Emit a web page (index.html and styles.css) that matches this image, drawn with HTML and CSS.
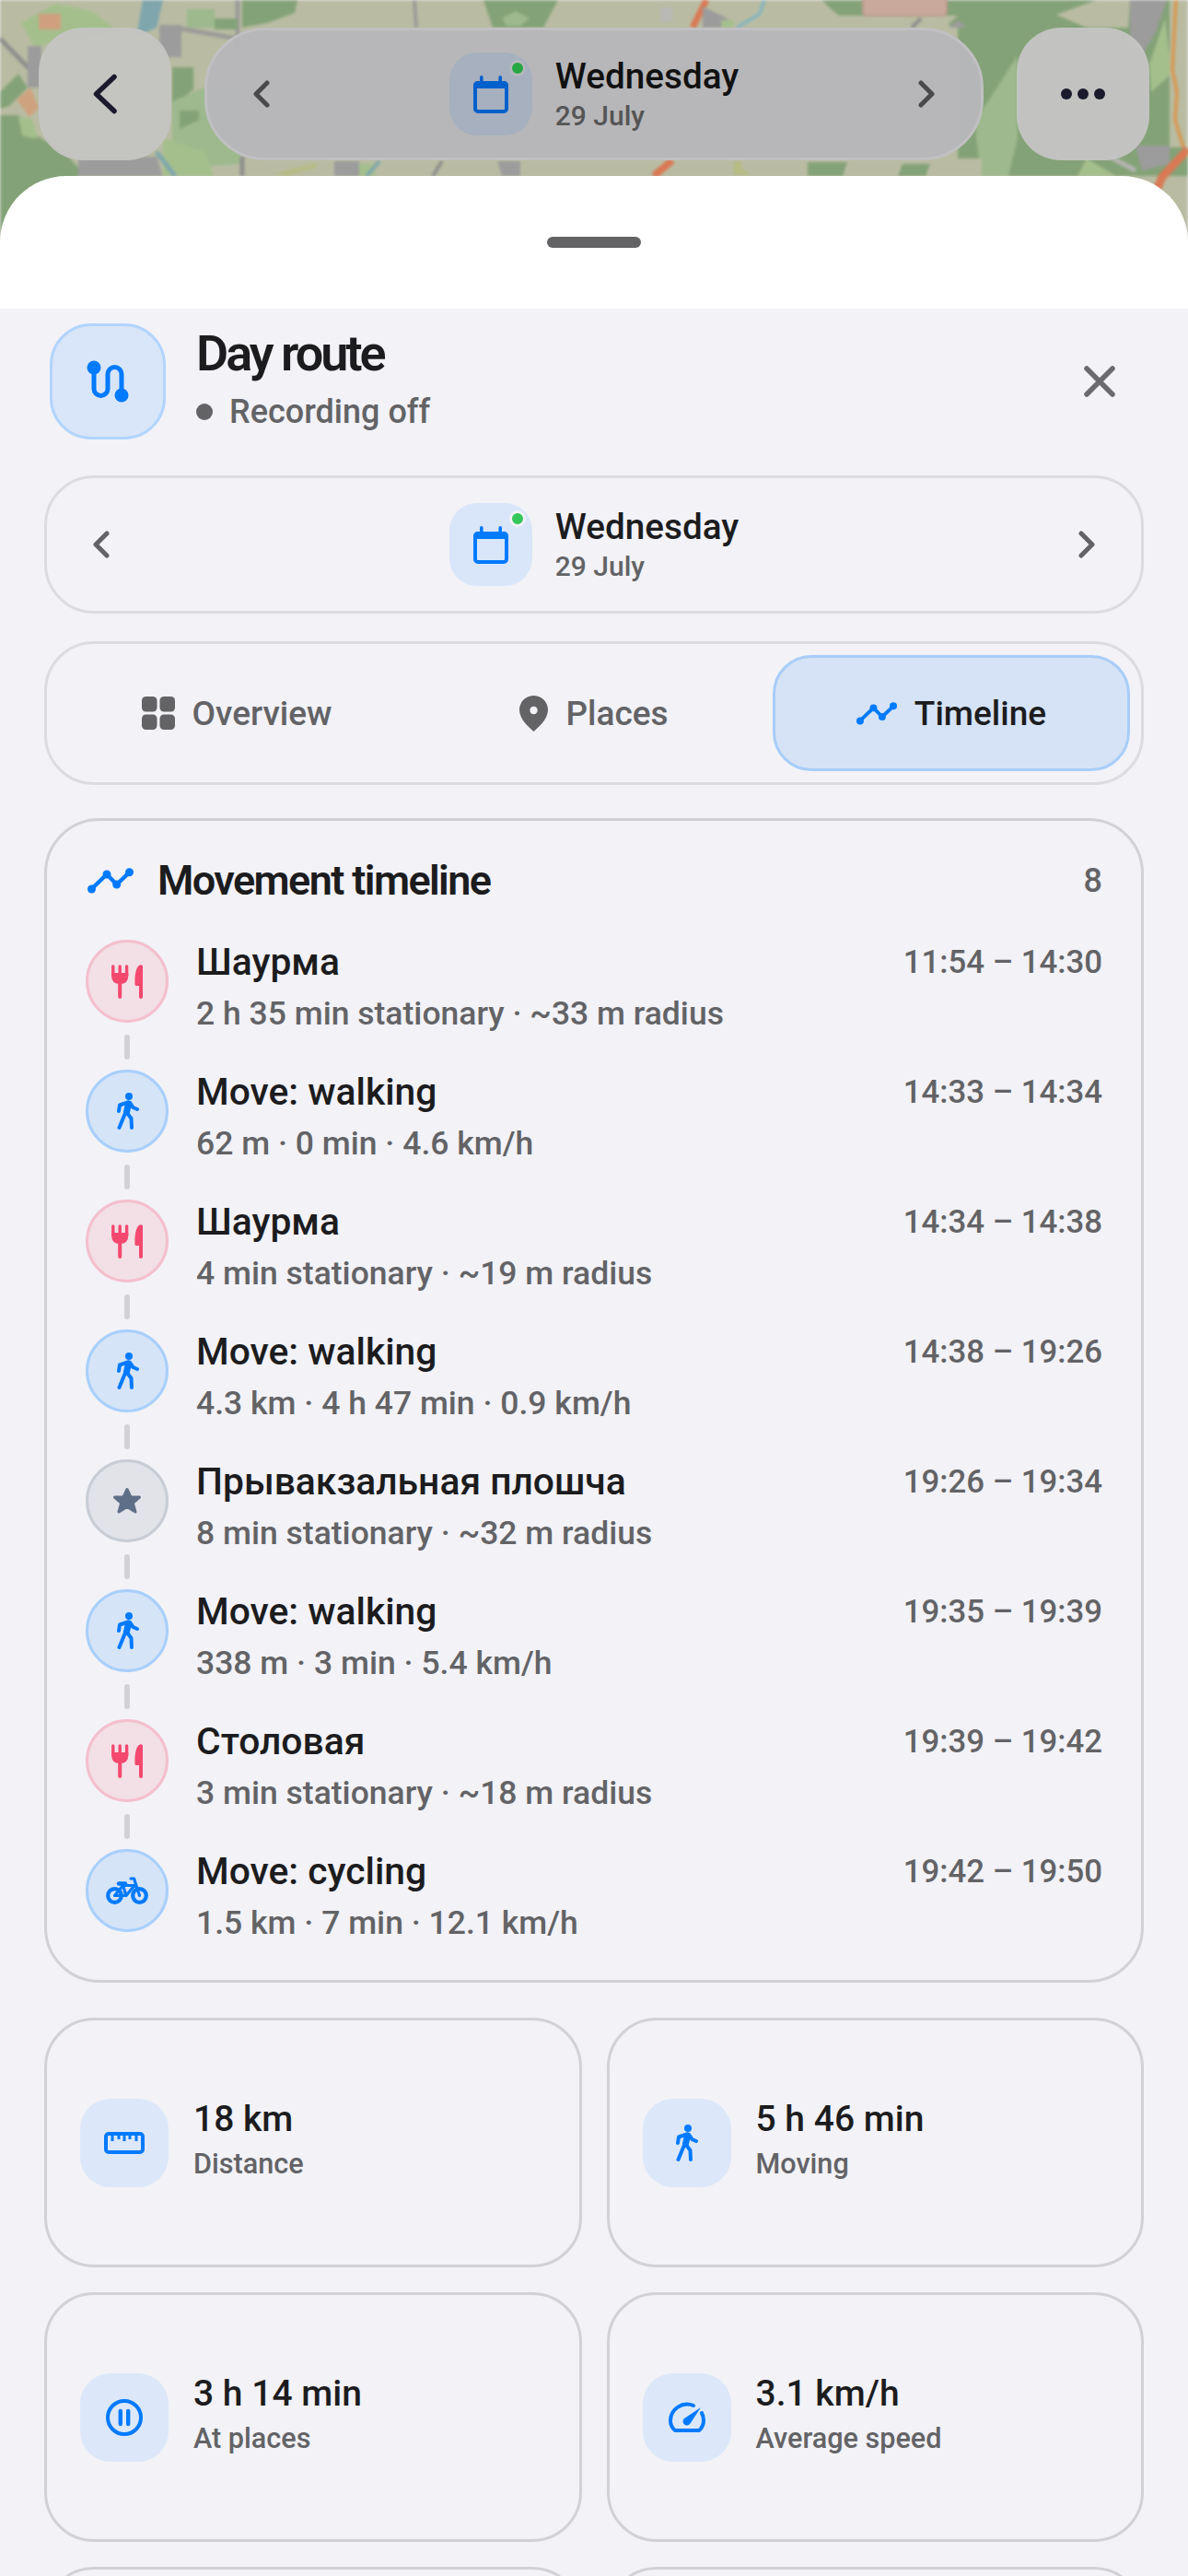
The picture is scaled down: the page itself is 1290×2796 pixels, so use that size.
FILE: index.html
```html
<!DOCTYPE html>
<html lang="en">
<head>
<meta charset="utf-8">
<title>Day route</title>
<link rel="stylesheet" href="styles.css">
</head>
<body>
<svg width="0" height="0" class="defs">
  <defs>
    <symbol id="fork" viewBox="0 0 34 37">
      <path d="M1.8 2V12M9.2 2V12M16.6 2V12" fill="none" stroke="currentColor" stroke-width="3.4" stroke-linecap="round"/>
      <path d="M.1 9H18.3V12Q18.300 21 9.200 21Q.1 21 .1 12Z" fill="currentColor"/>
      <path d="M9.2 18V35" fill="none" stroke="currentColor" stroke-width="4" stroke-linecap="round"/>
      <path d="M34 2V35a2 2 0 0 1-4 0V23H27a1.5 1.5 0 0 1-1.5-1.5C25 10 27 2 31 .5C33 0 34 1 34 2Z" fill="currentColor"/>
    </symbol>
    <symbol id="walk" viewBox="0 0 25 40">
      <circle cx="14" cy="4" r="4" fill="currentColor"/>
      <path d="M13.5 12L11.5 21" fill="none" stroke="currentColor" stroke-width="7" stroke-linecap="round"/>
      <path d="M13 10.5L4 13.5L3 20M15 11L18.5 16L23 18M10.500 21L3.500 38M12 22L16.500 28L17 38" fill="none" stroke="currentColor" stroke-width="4" stroke-linecap="round" stroke-linejoin="round"/>
    </symbol>
    <symbol id="star" viewBox="0 0 32 30">
      <path d="M16 2.5L20 11H29.5L22.3 17.3L25 27L16 21.5L7 27L9.7 17.3L2.5 11H12Z" fill="currentColor" stroke="currentColor" stroke-width="3" stroke-linejoin="round"/>
    </symbol>
    <symbol id="bike" viewBox="0 0 46 30">
      <circle cx="9.5" cy="20.5" r="7.3" fill="none" stroke="currentColor" stroke-width="4.2"/>
      <circle cx="36.5" cy="20.5" r="7.3" fill="none" stroke="currentColor" stroke-width="4.2"/>
      <path d="M9.5 20.5H22L31 9.5H18.5L9.5 20.5M18 8L22 20.5M27 2H30.5L36.5 20.5" fill="none" stroke="currentColor" stroke-width="3.2" stroke-linecap="round" stroke-linejoin="round"/>
      <path d="M14 7.5H21" fill="none" stroke="currentColor" stroke-width="4.5" stroke-linecap="round"/>
    </symbol>
    <symbol id="trend" viewBox="0 0 50 28">
      <path d="M4.3 23L21 7L31.7 18L45.7 4.7" fill="none" stroke="currentColor" stroke-width="4.4" stroke-linejoin="round"/>
      <circle cx="4.5" cy="23" r="4.5" fill="currentColor"/><circle cx="21" cy="7" r="4.5" fill="currentColor"/><circle cx="31.7" cy="18" r="4.5" fill="currentColor"/><circle cx="45.5" cy="4.7" r="4.5" fill="currentColor"/>
    </symbol>
    <symbol id="cal" viewBox="0 0 38 41">
      <rect x="2" y="8" width="34" height="31" rx="3" fill="none" stroke="currentColor" stroke-width="4"/>
      <path d="M0 11a5 5 0 0 1 5-5H33a5 5 0 0 1 5 5V14H0Z" fill="currentColor"/>
      <rect x="7" y="0" width="3.6" height="9" rx="1.8" fill="currentColor"/><rect x="27.4" y="0" width="3.6" height="9" rx="1.8" fill="currentColor"/>
    </symbol>
    <symbol id="chev-l" viewBox="0 0 18 30"><path d="M15 3L3 15L15 27" fill="none" stroke="currentColor" stroke-width="5" stroke-linecap="round" stroke-linejoin="round"/></symbol>
    <symbol id="chev-r" viewBox="0 0 18 30"><path d="M3 3L15 15L3 27" fill="none" stroke="currentColor" stroke-width="5" stroke-linecap="round" stroke-linejoin="round"/></symbol>
  </defs>
</svg>

<div class="screen">
  <svg class="map" viewBox="0 0 1290 270" preserveAspectRatio="none" aria-hidden="true">
    <g class="map-art">
      <rect width="1290" height="270" fill="#b9bca2"/>
      <path d="M23 25L60 4L100 12L125 32L90 45L55 46L38 52Z" fill="#a4bf8c"/>
      <rect x="42" y="15" width="24" height="17" fill="#d0a07e"/>
      <path d="M155 0H177L170 30L148 40Z" fill="#7fa6ad"/>
      <path d="M173 27H197V62H180L173 50Z" fill="#9c9c9c"/>
      <path d="M190 30L258 42M258 0V60" stroke="#9b9b98" stroke-width="5" fill="none"/>
      <path d="M203 10H233V30H203Z" fill="#9db98d"/>
      <path d="M263 0H323L320 14L290 25L263 30ZM233 20H258V32H233Z" fill="#84a277"/>
      <path d="M0 42L42 85" stroke="#8f8f8d" stroke-width="5" fill="none"/>
      <path d="M30 50H45V95H30Z" fill="#9c9c9c"/>
      <path d="M0 100L20 80L30 95L10 115L0 118ZM0 125H20L40 147L60 160V191H0Z" fill="#84a277"/>
      <path d="M18 108L33 95L42 117L32 127Z" fill="#cfa27f"/>
      <path d="M20 127L34 128L42 153L24 147Z" fill="#a4bf8c"/>
      <path d="M0 147L40 150L70 165L85 182V191L70 270H0Z" fill="#84a277"/>
      <path d="M85 170H170L177 191H85Z" fill="#9c9c9c"/>
      <path d="M187 73H210V97L187 117Z" fill="#84a277"/>
      <path d="M187 110L222 95H262V178L222 180L187 160Z" fill="#9db98d"/>
      <path d="M195 120H216V130L195 140Z" fill="#84a277"/>
      <path d="M177 150L223 165L232 191H177Z" fill="#a4bf8c"/>
      <path d="M170 165L190 191" stroke="#7fa6ad" stroke-width="5" fill="none"/>
      <path d="M263 170V191" stroke="#8f8f8d" stroke-width="5" fill="none"/>
      <path d="M363 175H390V191H363Z" fill="#9c9c9c"/>
      <path d="M390 178H407V191H390Z" fill="#a4bf8c"/>
      <path d="M398 191L412 175" stroke="#7fa6ad" stroke-width="4" fill="none"/>
      <path d="M300 188L343 177V182L310 191Z" fill="#b7bb84"/>
      <path d="M450 0L452 30" stroke="#9b9b98" stroke-width="4" fill="none"/>
      <path d="M525 0H606L590 30H535Z" fill="#84a277"/>
      <path d="M545 20L560 12L575 20L565 28H550Z" fill="#9db98d"/>
      <path d="M767 0L752 30" stroke="#d97a55" stroke-width="7" fill="none"/>
      <path d="M717 8H730V24H717Z" fill="#b9b9b5"/>
      <path d="M763 7L790 20L795 30H763Z" fill="#9c9c9c"/>
      <path d="M783 22H797V30H783Z" fill="#a4bf8c"/>
      <path d="M800 30L825 15L830 0" stroke="#8ab5bd" stroke-width="4" fill="none"/>
      <path d="M480 175L470 191" stroke="#8f8f8d" stroke-width="4" fill="none"/>
      <path d="M540 175H565V191H545Z" fill="#9c9c9c"/>
      <path d="M730 174L710 191" stroke="#d97a55" stroke-width="8" fill="none"/>
      <path d="M797 175H805V182L815 190H797Z" fill="#b7bb84"/>
      <path d="M893 0H1290V191H1104L1066 191L1040 172V30L1000 17L937 17L915 20L900 8Z" fill="#84a277"/>
      <path d="M860 17H1040L1025 30H860Z" fill="#b9bca2"/>
      <rect x="937" y="-4" width="91" height="21" rx="4" fill="#c8a99b" stroke="#bb9a8a" stroke-width="2"/>
      <path d="M1000 20L990 30" stroke="#8f8f8d" stroke-width="4" fill="none"/>
      <path d="M1040 22L1050 30H1030Z" fill="#9c9c9c"/>
      <path d="M1060 130L1105 60V150L1095 191H1065L1060 150Z" fill="#9db98d"/>
      <path d="M860 172H1066V191H860Z" fill="#b9bca2"/>
      <path d="M877 176H920L915 191H877ZM980 178H1010L1005 191H975Z" fill="#84a277"/>
      <path d="M1147 16L1190 0H1227L1225 30L1180 30Z" fill="#b9bca2"/>
      <path d="M1227 0H1267L1255 35L1240 60L1227 40Z" fill="#9c9c9c"/>
      <path d="M1265 20L1272 80L1250 100L1248 70Z" fill="#a4bf8c"/>
      <path d="M1270 0H1290V160H1270Z" fill="#b9bca2"/>
      <path d="M1277 0L1273 75L1278 100L1276 130L1285 160" stroke="#d69a55" stroke-width="4" fill="none"/>
      <path d="M1233 158H1270V178L1240 185Z" fill="#9c9c9c"/>
      <path d="M1205 170L1233 185" stroke="#b5b5b0" stroke-width="5" fill="none"/>
      <path d="M1290 162L1262 192L1256 206" stroke="#d97a55" stroke-width="9" fill="none"/>
      <path d="M1180 172L1212 191H1170Z" fill="#a4bf8c"/>
    </g>
  </svg>

  <header class="topbar">
    <button class="glass square dark" aria-label="Back"><svg class="i-back" viewBox="0 0 26 44"><path d="M23 3.500L3.500 22L23 40.500" fill="none" stroke="currentColor" stroke-width="5.500" stroke-linecap="round" stroke-linejoin="round"/></svg></button>
    <div class="glass pill">
      <svg class="i-chev"><use href="#chev-l"/></svg>
      <div class="date-mid">
        <div class="date-tile dim"><svg class="i-cal"><use href="#cal"/></svg><span class="live"></span></div>
        <div class="date-text"><div class="date-day">Wednesday</div><div class="date-sub">29 July</div></div>
      </div>
      <svg class="i-chev"><use href="#chev-r"/></svg>
    </div>
    <button class="glass square dark" aria-label="More"><span class="dots"><i></i><i></i><i></i></span></button>
  </header>

  <main class="sheet">
    <div class="grabber-zone"><span class="grabber"></span></div>
    <div class="content">
      <section class="head">
        <div class="head-tile">
          <svg class="i-route" viewBox="0 0 50 50"><path d="M10 10V33a7.5 7.5 0 0 0 15 0V17a7.5 7.5 0 0 1 15 0V40" fill="none" stroke="currentColor" stroke-width="5"/><circle cx="10" cy="10" r="7.5" fill="currentColor"/><circle cx="40" cy="40" r="7.5" fill="currentColor"/></svg>
        </div>
        <div class="head-text">
          <h1 class="title">Day route</h1>
          <div class="status"><span class="status-dot"></span>Recording off</div>
        </div>
        <button class="close" aria-label="Close"><svg class="i-close" viewBox="0 0 34 34"><path d="M3 3L31 31M31 3L3 31" stroke="currentColor" stroke-width="5.5" stroke-linecap="round" fill="none"/></svg></button>
      </section>

      <section class="card date-card">
        <svg class="i-chev"><use href="#chev-l"/></svg>
        <div class="date-mid">
          <div class="date-tile"><svg class="i-cal"><use href="#cal"/></svg><span class="live"></span></div>
          <div class="date-text"><div class="date-day">Wednesday</div><div class="date-sub">29 July</div></div>
        </div>
        <svg class="i-chev"><use href="#chev-r"/></svg>
      </section>

      <nav class="card tabs">
        <div class="tab"><svg class="i-grid" viewBox="0 0 36 36"><rect width="16.5" height="16.5" rx="4.5" fill="currentColor"/><rect x="19.5" width="16.5" height="16.5" rx="4.5" fill="currentColor"/><rect y="19.5" width="16.5" height="16.5" rx="4.5" fill="currentColor"/><rect x="19.5" y="19.5" width="16.5" height="16.5" rx="4.5" fill="currentColor"/></svg>Overview</div>
        <div class="tab"><svg class="i-pin" viewBox="0 0 31 39"><path d="M15.5 0C24 0 31 7 31 15.5C31 26 20 35 15.5 39C11 35 0 26 0 15.5C0 7 7 0 15.5 0Z" fill="currentColor"/><circle cx="15.5" cy="16" r="4.2" fill="#f2f2f7"/></svg>Places</div>
        <div class="tab active"><svg class="i-trend-s"><use href="#trend"/></svg>Timeline</div>
      </nav>

      <section class="card timeline">
        <div class="tl-head">
          <svg class="i-trend"><use href="#trend"/></svg>
          <h2 class="tl-title">Movement timeline</h2>
          <span class="tl-count">8</span>
        </div>
        <div class="tl-row"><div class="tl-rail"><span class="dot food"><svg class="i-fork"><use href="#fork"/></svg></span><span class="link"></span></div><div class="tl-body"><div class="tl-line"><span class="tl-name">Шаурма</span><span class="tl-time">11:54 – 14:30</span></div><div class="tl-sub">2 h 35 min stationary · ~33 m radius</div></div></div>
        <div class="tl-row"><div class="tl-rail"><span class="dot move"><svg class="i-walk"><use href="#walk"/></svg></span><span class="link"></span></div><div class="tl-body"><div class="tl-line"><span class="tl-name">Move: walking</span><span class="tl-time">14:33 – 14:34</span></div><div class="tl-sub">62 m · 0 min · 4.6 km/h</div></div></div>
        <div class="tl-row"><div class="tl-rail"><span class="dot food"><svg class="i-fork"><use href="#fork"/></svg></span><span class="link"></span></div><div class="tl-body"><div class="tl-line"><span class="tl-name">Шаурма</span><span class="tl-time">14:34 – 14:38</span></div><div class="tl-sub">4 min stationary · ~19 m radius</div></div></div>
        <div class="tl-row"><div class="tl-rail"><span class="dot move"><svg class="i-walk"><use href="#walk"/></svg></span><span class="link"></span></div><div class="tl-body"><div class="tl-line"><span class="tl-name">Move: walking</span><span class="tl-time">14:38 – 19:26</span></div><div class="tl-sub">4.3 km · 4 h 47 min · 0.9 km/h</div></div></div>
        <div class="tl-row"><div class="tl-rail"><span class="dot place"><svg class="i-star"><use href="#star"/></svg></span><span class="link"></span></div><div class="tl-body"><div class="tl-line"><span class="tl-name">Прывакзальная плошча</span><span class="tl-time">19:26 – 19:34</span></div><div class="tl-sub">8 min stationary · ~32 m radius</div></div></div>
        <div class="tl-row"><div class="tl-rail"><span class="dot move"><svg class="i-walk"><use href="#walk"/></svg></span><span class="link"></span></div><div class="tl-body"><div class="tl-line"><span class="tl-name">Move: walking</span><span class="tl-time">19:35 – 19:39</span></div><div class="tl-sub">338 m · 3 min · 5.4 km/h</div></div></div>
        <div class="tl-row"><div class="tl-rail"><span class="dot food"><svg class="i-fork"><use href="#fork"/></svg></span><span class="link"></span></div><div class="tl-body"><div class="tl-line"><span class="tl-name">Столовая</span><span class="tl-time">19:39 – 19:42</span></div><div class="tl-sub">3 min stationary · ~18 m radius</div></div></div>
        <div class="tl-row"><div class="tl-rail"><span class="dot move"><svg class="i-bike"><use href="#bike"/></svg></span></div><div class="tl-body"><div class="tl-line"><span class="tl-name">Move: cycling</span><span class="tl-time">19:42 – 19:50</span></div><div class="tl-sub">1.5 km · 7 min · 12.1 km/h</div></div></div>
      </section>

      <section class="stats">
        <div class="stat"><span class="stat-tile"><svg class="i-ruler" viewBox="0 0 44 24"><rect x="2" y="2" width="40" height="20" rx="3" fill="none" stroke="currentColor" stroke-width="4"/><path d="M9 2V10M16 2V8M22 2V10M28 2V8M35 2V10" stroke="currentColor" stroke-width="3" fill="none"/></svg></span><div class="stat-text"><div class="stat-val">18 km</div><div class="stat-lab">Distance</div></div></div>
        <div class="stat"><span class="stat-tile"><svg class="i-walk"><use href="#walk"/></svg></span><div class="stat-text"><div class="stat-val">5 h 46 min</div><div class="stat-lab">Moving</div></div></div>
        <div class="stat"><span class="stat-tile"><svg class="i-pause" viewBox="0 0 40 40"><circle cx="20" cy="20" r="18" fill="none" stroke="currentColor" stroke-width="4"/><path d="M15.8 13V27M24.2 13V27" stroke="currentColor" stroke-width="4.4" stroke-linecap="round" fill="none"/></svg></span><div class="stat-text"><div class="stat-val">3 h 14 min</div><div class="stat-lab">At places</div></div></div>
        <div class="stat"><span class="stat-tile"><svg class="i-gauge" viewBox="0 0 40 33"><path d="M7 31H33C36.500 28 38 24.500 38 20.500A18 18 0 0 0 36 12M27 4A18 18 0 0 0 2 20.500C2 24.500 3.500 28 7 31" fill="none" stroke="currentColor" stroke-width="4" stroke-linecap="round"/><path d="M35 6L23.500 23.500A4.300 4.300 0 1 1 17 18Z" fill="currentColor"/></svg></span><div class="stat-text"><div class="stat-val">3.1 km/h</div><div class="stat-lab">Average speed</div></div></div>
        <div class="stat"></div>
        <div class="stat"></div>
      </section>
    </div>
  </main>
</div>
</body>
</html>
```
FILE: styles.css
```css
* { box-sizing: border-box; }
html, body { margin: 0; padding: 0; }
body {
  width: 1290px;
  height: 2796px;
  overflow: hidden;
  font-family: Roboto, "Noto Sans", sans-serif;
  color: #1c1c1e;
  background: #f2f2f7;
}
.defs { position: absolute; }
button { border: 0; padding: 0; font: inherit; background: none; color: inherit; }
h1, h2 { margin: 0; }

.screen { position: relative; height: 2796px; overflow: hidden; }

/* map backdrop */
.map { position: absolute; left: 0; top: 0; width: 1290px; height: 270px; }
.map-art { filter: blur(1.5px); }

/* floating top bar */
.topbar {
  position: relative;
  height: 191px;
  padding: 30px 42px 0;
  display: flex;
  gap: 36px;
  align-items: flex-start;
}
.glass { height: 144px; display: flex; align-items: center; justify-content: center; }
.square {
  width: 144px;
  flex: none;
  border-radius: 48px;
  background: rgba(196, 196, 194, .97);
  color: #1a1a2c;
}
.pill {
  flex: 1;
  border-radius: 66px;
  background: rgba(183, 183, 186, .97);
  border: 3px solid #c0c0c2;
  justify-content: space-between;
  padding: 0 50px;
  color: #4a4a4c;
}
.i-back { width: 26px; height: 44px; }
.dots { display: flex; gap: 6px; }
.dots i { width: 12px; height: 12px; border-radius: 50%; background: #1a1a2c; }

/* sheet */
.sheet { position: relative; }
.grabber-zone {
  height: 144px;
  background: #fff;
  border-radius: 72px 72px 0 0;
  display: flex;
  justify-content: center;
  padding-top: 66px;
}
.grabber { width: 102px; height: 12px; border-radius: 6px; background: #636366; }
.content { background: #f2f2f7; padding: 16px 48px 0; }

/* title row */
.head { display: flex; align-items: flex-start; height: 126px; margin-left: 6px; }
.head-tile {
  width: 126px; height: 126px; flex: none;
  border-radius: 45px;
  background: #d9e6f9;
  border: 3px solid #b2d4fd;
  display: flex; align-items: center; justify-content: center;
  color: #007aff;
}
.i-route { width: 50px; height: 50px; }
.head-text { flex: 1; padding: 3px 0 0 33px; }
.title { font-size: 54px; line-height: 60px; font-weight: 600; letter-spacing: -3px; }
.status {
  display: flex; align-items: center; gap: 18px;
  margin-top: 12px;
  font-size: 36px; line-height: 42px; font-weight: 500; color: #636366;
}
.status-dot { width: 18px; height: 18px; border-radius: 50%; background: #636366; }
.close {
  width: 60px; height: 60px; margin: 33px 18px 0 0;
  display: flex; align-items: center; justify-content: center;
  color: #6b6b6f;
}
.i-close { width: 34px; height: 34px; }

/* generic outlined card */
.card { border: 3px solid #dcdce0; border-radius: 54px; }

/* date switcher */
.date-card {
  height: 150px; margin-top: 39px;
  display: flex; align-items: center; justify-content: space-between;
  padding: 0 50px;
  color: #636366;
}
.i-chev { width: 18px; height: 30px; flex: none; }
.date-mid { display: flex; align-items: center; gap: 25px; }
.date-tile {
  position: relative;
  width: 90px; height: 90px;
  border-radius: 30px;
  background: #d9e6f9;
  display: flex; align-items: center; justify-content: center;
  color: #007aff;
}
.date-tile.dim { background: #a6b0bf; color: #0060cc; }
.i-cal { width: 38px; height: 41px; }
.live {
  position: absolute; right: 7px; top: 8px;
  width: 18px; height: 18px; border-radius: 50%;
  background: #34c759;
  border: 3px solid #f2f2f7;
}
.dim .live { background: #28a745; border-color: #b5b8bd; }
.date-day { font-size: 38.7px; line-height: 46px; font-weight: 500; color: #1c1c1e; }
.date-sub { font-size: 30px; line-height: 36px; font-weight: 500; color: #636366; margin-top: 2px; }
.dim + .date-text .date-day { color: #111; }
.dim + .date-text .date-sub { color: #555; }

/* tabs */
.tabs { height: 156px; margin-top: 30px; padding: 12px; display: flex; }
.tab {
  flex: 1;
  display: flex; align-items: center; justify-content: center; gap: 19px;
  font-size: 37px; font-weight: 500; color: #636366;
  border: 3px solid transparent;
  border-radius: 42px;
}
.tab.active { background: #d6e3f6; border-color: #a8cdf8; color: #1c1c1e; }
.i-grid { width: 36px; height: 36px; }
.i-pin { width: 31px; height: 39px; }
.i-trend-s { width: 44px; height: 25px; color: #007aff; }

/* timeline */
.timeline { margin-top: 36px; padding: 42px; border-color: #d1d1d6; border-radius: 60px; }
.tl-head { display: flex; align-items: center; height: 45px; margin-bottom: 42px; }
.i-trend { width: 50px; height: 28px; margin-left: 2px; color: #007aff; flex: none; }
.tl-title { flex: 1; margin-left: 26px; font-size: 45px; line-height: 45px; font-weight: 600; letter-spacing: -1.6px; }
.tl-count { font-size: 36px; font-weight: 500; color: #636366; }
.tl-row { display: flex; gap: 30px; min-height: 141px; }
.tl-row:last-child { min-height: 0; }
.tl-rail { width: 90px; flex: none; display: flex; flex-direction: column; align-items: center; }
.dot {
  width: 90px; height: 90px; flex: none;
  border-radius: 50%;
  border: 3px solid;
  display: flex; align-items: center; justify-content: center;
}
.dot.food { background: #f3dfe6; border-color: #f5bfcd; color: #f4486f; }
.dot.move { background: #d6e4f8; border-color: #a8cffc; color: #007aff; }
.dot.place { background: #e1e3e8; border-color: #c8ccd5; color: #5f6f88; }
.link { width: 6px; height: 27px; margin-top: 13px; border-radius: 3px; background: #d1d1d6; }
.i-fork { width: 34px; height: 37px; }
.i-walk { width: 25px; height: 40px; color: #007aff; }
.i-star { width: 32px; height: 30px; }
.i-bike { width: 46px; height: 30px; }
.tl-body { flex: 1; min-width: 0; }
.tl-line { display: flex; justify-content: space-between; align-items: center; height: 47px; }
.tl-name { font-size: 40.8px; font-weight: 500; }
.tl-time { font-size: 34.8px; font-weight: 500; color: #636366; }
.tl-sub { font-size: 35.5px; line-height: 39px; margin-top: 14px; font-weight: 500; color: #636366; }

/* stats */
.stats { margin-top: 38px; display: grid; grid-template-columns: 1fr 1fr; gap: 27px; }
.stat {
  height: 271px;
  border: 3px solid #d1d1d6;
  border-radius: 54px;
  padding: 0 36px;
  display: flex; align-items: center; gap: 27px;
}
.stat-tile {
  width: 96px; height: 96px; flex: none;
  border-radius: 33px;
  background: #dce8f9;
  display: flex; align-items: center; justify-content: center;
  color: #007aff;
}
.stat-text { margin-bottom: 5px; }
.stat-val { font-size: 39px; line-height: 48px; font-weight: 500; }
.stat-lab { font-size: 30.6px; line-height: 42px; margin-top: 4px; font-weight: 500; color: #636366; }
.i-ruler { width: 44px; height: 24px; }
.i-pause { width: 40px; height: 40px; }
.i-gauge { width: 40px; height: 33px; }
```
